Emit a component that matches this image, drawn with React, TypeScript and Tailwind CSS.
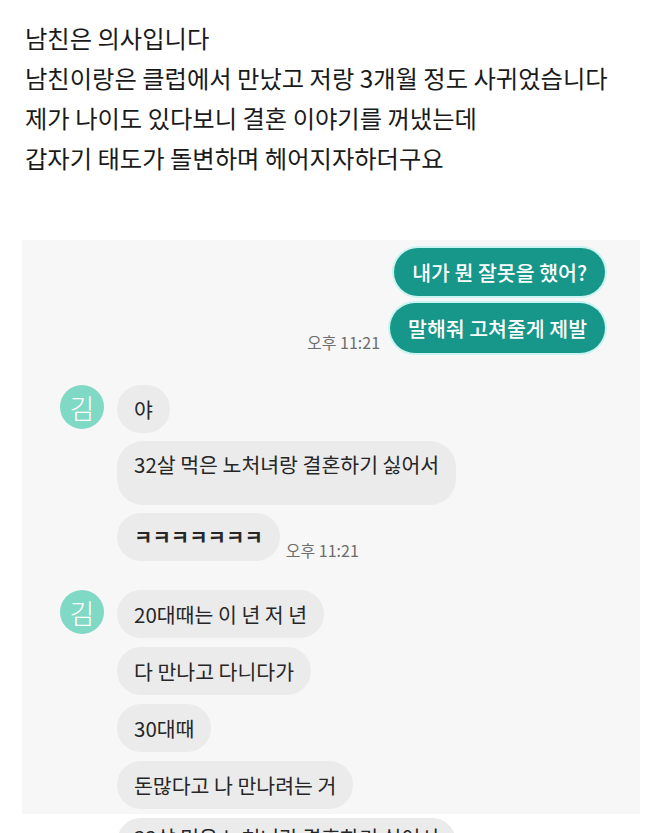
const font = {
  fontFamily: '"Noto Sans CJK KR", "Noto Sans", sans-serif',
};

function Avatar() {
  return (
    <div className="flex h-[44px] w-[44px] shrink-0 items-center justify-center rounded-full bg-[#80d9c4] text-[27px] font-light leading-none text-white">
      김
    </div>
  );
}

function InBubble({ children, tall }: { children: React.ReactNode; tall?: boolean }) {
  return (
    <div
      className={
        tall
          ? "flex h-[64px] items-start rounded-[26px] bg-[#ebebeb] px-[17px] pt-[9px] text-[20.5px] leading-[28px] text-[#262626]"
          : "flex h-[48px] items-center rounded-full bg-[#ebebeb] px-[17px] text-[20.5px] leading-[28px] text-[#262626]"
      }
    >
      {children}
    </div>
  );
}

function OutBubble({ children, h }: { children: React.ReactNode; h: string }) {
  return (
    <div
      className={`flex ${h} items-center rounded-full bg-[#17968a] px-[18px] text-[20.5px] font-medium text-white shadow-[0_0_0_2px_#c8f4f1]`}
    >
      {children}
    </div>
  );
}

function Time() {
  return <span className="mb-[1px] text-[16px] leading-[20px] text-[#6d6d6d]">오후 11:21</span>;
}

export default function App() {
  return (
    <div className="h-[833px] w-[654px] overflow-hidden bg-white" style={font}>
      {/* Post text */}
      <div className="pl-[25px] pt-[18px] text-[24.3px] leading-[40px] text-[#1a1a1a]">
        <p>남친은 의사입니다</p>
        <p>남친이랑은 클럽에서 만났고 저랑 3개월 정도 사귀었습니다</p>
        <p>제가 나이도 있다보니 결혼 이야기를 꺼냈는데</p>
        <p>갑자기 태도가 돌변하며 헤어지자하더구요</p>
      </div>

      {/* Chat capture */}
      <div className="ml-[22px] mt-[62px] w-[618px] bg-[#f7f7f7] pb-[5px] pt-[8px]">
        <div className="flex flex-col items-end gap-[7px] pr-[35px]">
          <OutBubble h="h-[48px]">내가 뭔 잘못을 했어?</OutBubble>
          <div className="flex items-end gap-[10px]">
            <Time />
            <OutBubble h="h-[50px]">말해줘 고쳐줄게 제발</OutBubble>
          </div>
        </div>

        <div className="mt-[32px] flex gap-[13px] pl-[38px]">
          <Avatar />
          <div className="flex flex-col items-start gap-[8px]">
            <InBubble>야</InBubble>
            <InBubble tall>32살 먹은 노처녀랑 결혼하기 싫어서</InBubble>
            <div className="flex items-end gap-[6px]">
              <InBubble>
                <span className="text-[20px] font-bold">ㅋㅋㅋㅋㅋㅋㅋ</span>
              </InBubble>
              <Time />
            </div>
          </div>
        </div>

        <div className="mt-[29px] flex gap-[13px] pl-[38px]">
          <Avatar />
          <div className="flex flex-col items-start gap-[9px]">
            <InBubble>20대때는 이 년 저 년</InBubble>
            <InBubble>다 만나고 다니다가</InBubble>
            <InBubble>30대때</InBubble>
            <InBubble>돈많다고 나 만나려는 거</InBubble>
          </div>
        </div>
      </div>

      {/* next message, cut off by the screenshot edge */}
      <div className="ml-[117px] mt-[4px] flex">
        <div className="flex h-[48px] items-start rounded-full bg-[#ebebeb] px-[17px] pt-[5px] text-[20.5px] leading-[28px] text-[#262626]">
          32살 먹은 노처녀랑 결혼하기 싫어서
        </div>
      </div>
    </div>
  );
}
